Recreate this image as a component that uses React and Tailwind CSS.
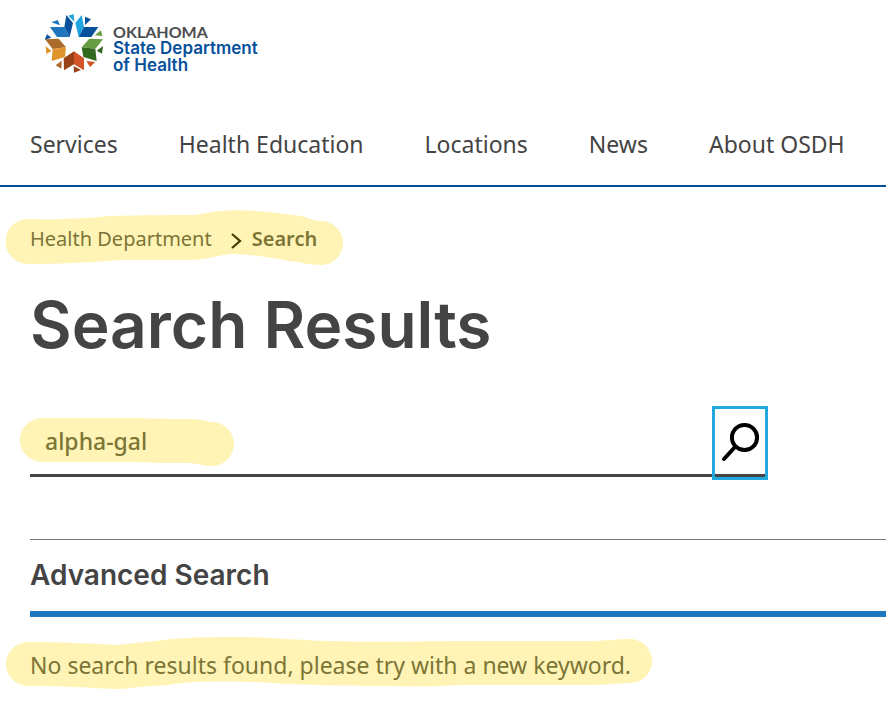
import React from "react";

const navLinks = ["Services", "Health Education", "Locations", "News", "About OSDH"];

function LogoMark() {
  return (
    <svg viewBox="24 21 186 189" className="h-[63px] w-[62px]" aria-hidden="true">
      <path fill="#1d76bd" d="M45 66H88L104 96H66Z" />
      <path fill="#07509c" d="M94 30L114 54L104 96L88 66Z" />
      <path fill="#1fa6df" d="M140 30L147 66L131 96L121 54Z" />
      <path fill="#07509c" d="M147 66H190L169 96H131Z" />
      <path fill="#669d41" d="M140 127L163 101L204 103L181 131Z" />
      <path fill="#33691e" d="M140 127L181 131L185 168L145 156Z" />
      <path fill="#984216" d="M86 160L117 139V178L87 196Z" />
      <path fill="#d35426" d="M117 139L147 160V196L117 178Z" />
      <path fill="#a96a2c" d="M30 103L71 101L93 127L53 132Z" />
      <path fill="#df942c" d="M53 132L93 127L90 156L50 168Z" />
      <path fill="#1fa6df" d="M100 32L116 27L118 50Z" />
      <path fill="#07509c" d="M150 35L168 43L150 60Z" />
      <path fill="#669d41" d="M179 91L198 76L202 93Z" />
      <path fill="#33691e" d="M185 137L204 123L201 146Z" />
      <path fill="#d35426" d="M154 168L181 171L165 186Z" />
      <path fill="#984216" d="M116 183L138 195L117 203Z" />
      <path fill="#a96a2c" d="M62 181L80 167L79 191Z" />
      <path fill="#df942c" d="M32 123L49 138L34 147Z" />
      <path fill="#07509c" d="M29 104L36 88L49 98Z" />
      <path fill="#1d76bd" d="M49 52L68 45L75 61Z" />
    </svg>
  );
}

// hand-drawn marker stroke behind a line of text
function Marker({ viewBox, d, className }) {
  return (
    <svg viewBox={viewBox} className={`absolute -z-10 max-w-none ${className}`} aria-hidden="true">
      <path fill="#fff4b5" d={d} />
    </svg>
  );
}

export default function App() {
  return (
    <div className="overflow-x-hidden bg-white pb-5 font-['Noto_Sans','Open_Sans',sans-serif] text-[#444]">
      <header className="border-b-2 border-[#004e9a]">
        <a href="#" className="ml-[43px] flex w-fit items-start gap-2 pt-3">
          <LogoMark />
          <span className="flex flex-col pt-3 font-['Inter',sans-serif] text-[17px] leading-[17px] font-semibold text-[#07509c]">
            <span className="font-['Lato',sans-serif] text-base leading-4 font-bold text-[#4d4d4f]">OKLAHOMA</span>
            <span>
              State Department
              <br />
              of Health
            </span>
          </span>
        </a>
        <nav className="flex gap-[61px] px-[30px] pt-[52px] pb-6 text-[23px] leading-[34px] whitespace-nowrap">
          {navLinks.map((label) => (
            <a key={label} href="#">{label}</a>
          ))}
        </nav>
      </header>

      <main className="pl-[30px]">
        <nav
          aria-label="Breadcrumb"
          className="relative isolate mt-9 flex w-fit items-center text-xl leading-8 text-[#7c7536]"
        >
          <Marker
            viewBox="0 204 350 68"
            className="-top-[19px] -left-[30px] h-[68px] w-[350px]"
            d="M28 219C60 220 90 218 110 216C150 215 180 215 195 215C215 211 235 209 255 211C275 212 290 215 302 216C310 219 316 221 322 221A22 22 0 0 1 320 265C310 265 300 262 290 261C275 258 250 254 230 254C215 256 205 260 190 260H120C100 262 60 264 28 264A22 22 0 0 1 28 219Z"
          />
          <a href="#">Health Department</a>
          <svg viewBox="0 0 12 18" className="mt-1 mr-[10px] ml-[18px] h-[18px] w-3" fill="none" stroke="#453f00" strokeWidth="2.3" aria-hidden="true">
            <path d="M2 2L10 9L2 16" />
          </svg>
          <span className="font-semibold" aria-current="page">Search</span>
        </nav>

        <h1 className="mt-8 font-['Inter',sans-serif] text-[64px] leading-[76px] font-semibold">
          Search Results
        </h1>

        <form
          className="relative isolate mt-[43px] mr-[118px] flex items-end"
          onSubmit={(e) => e.preventDefault()}
        >
          <Marker
            viewBox="16 412 224 60"
            className="top-[6px] -left-[14px] h-[60px] w-[224px]"
            d="M42 418H138C150 419 180 419 195 419C203 420 210 422 213 422A21 21 0 0 1 211 466C205 466 200 464 190 463C170 463 145 463 135 462H42A22 22 0 0 1 42 418Z"
          />
          <input
            type="text"
            aria-label="Search keyword"
            defaultValue="alpha-gal"
            className="mb-[3px] h-[71px] min-w-0 flex-1 border-b-3 border-[#444] bg-transparent px-[15px] pt-0.5 text-[23px] font-medium text-[#7c7536] outline-none"
          />
          <button
            type="submit"
            aria-label="Search"
            className="h-[74px] w-14 border-3 border-[#23a7df]"
          >
            <svg viewBox="715 409 50 68" className="h-[68px] w-[50px]" fill="none" stroke="#000" strokeWidth="4" strokeLinecap="round" aria-hidden="true">
              <circle cx="744.5" cy="437.5" r="12.6" />
              <path d="M735 447L724 459" />
              <path d="M715 475.500H765" stroke="#444" strokeWidth="3" strokeLinecap="butt" />
            </svg>
          </button>
        </form>

        <section className="mt-[59px] border-t border-[#777]">
          <h2 className="border-b-6 border-[#1d79bf] pt-[18px] pb-[19px] font-['Inter',sans-serif] text-[28px] leading-[34px] font-semibold">
            Advanced Search
          </h2>
          <p className="relative isolate mt-8 w-fit text-[23px] leading-8 text-[#7c7536]">
            <Marker
              viewBox="0 633 660 60"
              className="-top-4 -left-[30px] h-[60px] w-[660px]"
              d="M28 642C70 642 95 644 118 645C130 644 140 642 155 641C175 638 200 637 233 637C265 637 280 639 305 640C340 642 400 642 450 641H595C610 640 620 639 628 639A21 21 0 0 1 632 683C610 684 600 685 590 685H460C440 686 420 687 390 686C350 686 310 685 285 684C250 681 220 681 195 682C175 683 165 686 150 686C130 688 125 689 118 689C100 689 80 686 28 686A22 22 0 0 1 28 642Z"
            />
            No search results found, please try with a new keyword.
          </p>
        </section>
      </main>
    </div>
  );
}
